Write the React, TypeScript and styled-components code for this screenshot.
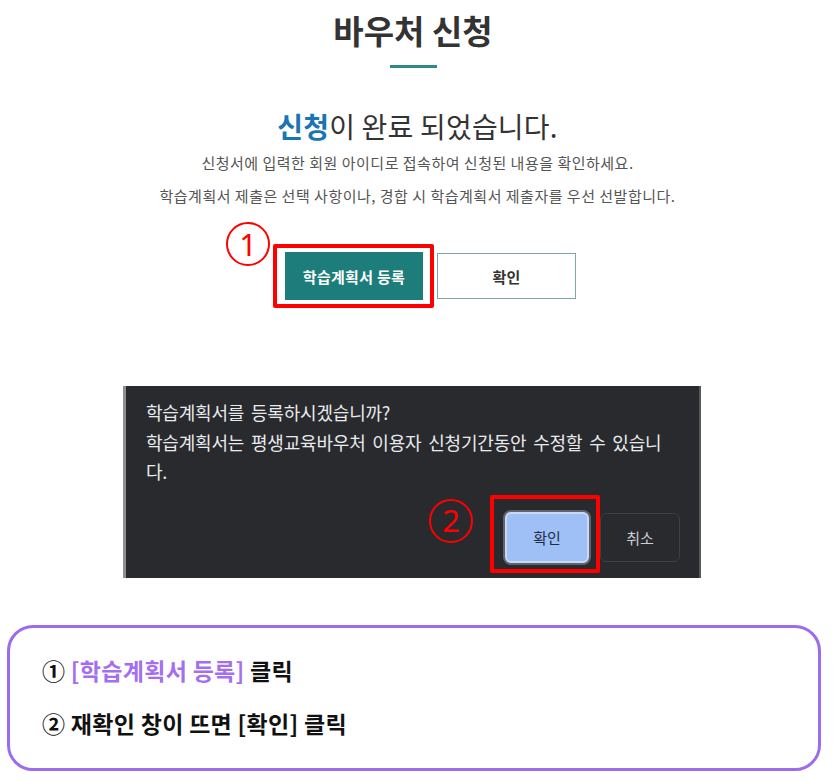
import React from 'react';
import styled, { createGlobalStyle } from 'styled-components';

const GlobalStyle = createGlobalStyle`
  body {
    margin: 0;
    background: #ffffff;
    font-family: "Noto Sans CJK KR", "Noto Sans", sans-serif;
  }
`;

const Page = styled.div`
  width: 835px;
  height: 782px;
  overflow: hidden;
  display: flex;
  flex-direction: column;
`;

const Header = styled.div`
  display: flex;
  flex-direction: column;
  align-items: center;
  padding: 10px 9px 0 0;
`;

const Title = styled.h1`
  margin: 0;
  font-size: 33px;
  line-height: 40px;
  font-weight: 700;
  color: #333;
`;

const TitleBar = styled.div`
  width: 47px;
  height: 3px;
  margin-top: 15px;
  background: #2c8a89;
`;

const Done = styled.p`
  margin: 40px 0 0;
  text-align: center;
  font-size: 28px;
  line-height: 36px;
  color: #333;
  letter-spacing: 0.2px;
`;

const Accent = styled.strong`
  color: #1a75b5;
  font-weight: 700;
`;

const Desc = styled.p`
  margin: 2px 0 0;
  text-align: center;
  font-size: 15px;
  line-height: 33px;
  color: #555;
  letter-spacing: 0.5px;
`;

const ActionRow = styled.div`
  display: flex;
  justify-content: center;
  align-items: center;
  gap: 3px;
  margin-top: 32px;
  padding-left: 14px;
`;

const Highlight = styled.div<{ $pad: string }>`
  position: relative;
  display: flex;
  border: 4px solid #ff0000;
  border-radius: 2px;
  padding: ${(p) => p.$pad};
`;

const Marker = styled.span<{ $left: number; $top: number }>`
  position: absolute;
  left: ${(p) => p.$left}px;
  top: ${(p) => p.$top}px;
  width: 40px;
  height: 40px;
  border: 2px solid #ff0000;
  border-radius: 50%;
  display: flex;
  align-items: center;
  justify-content: center;
  color: #ff0000;
  font-family: "Noto Sans", sans-serif;
  font-size: 31px;
  line-height: 1;
  font-weight: 400;
`;

const PageButton = styled.button<{ $primary?: boolean }>`
  width: ${(p) => (p.$primary ? 138 : 139)}px;
  height: ${(p) => (p.$primary ? 48 : 46)}px;
  border: ${(p) => (p.$primary ? 'none' : '1px solid #7fa6a6')};
  background: ${(p) => (p.$primary ? '#1c7d7a' : '#ffffff')};
  color: ${(p) => (p.$primary ? '#ffffff' : '#333')};
  font-family: inherit;
  font-size: 15px;
  font-weight: 700;
  letter-spacing: 0.3px;
  padding: 0;
`;

const Dialog = styled.div`
  margin: 78px 0 0 123px;
  width: 578px;
  height: 192px;
  box-sizing: border-box;
  background: #292a2d;
  border-left: 3px solid #8e9094;
  border-right: 2px solid #55575b;
  padding: 12px 19px 0 20px;
  display: flex;
  flex-direction: column;
`;

const DialogText = styled.p`
  margin: 0;
  width: 524px;
  font-size: 18px;
  line-height: 29.5px;
  color: #e8eaed;
  letter-spacing: -0.2px;
  word-spacing: 3px;
`;

const DialogActions = styled.div`
  display: flex;
  justify-content: flex-end;
  align-items: flex-start;
  margin-top: 8px;
`;

const DialogButton = styled.button<{ $primary?: boolean }>`
  width: ${(p) => (p.$primary ? 84 : 80)}px;
  height: ${(p) => (p.$primary ? 51 : 49)}px;
  margin-top: ${(p) => (p.$primary ? 0 : 18)}px;
  box-sizing: border-box;
  border-radius: 6px;
  border: ${(p) => (p.$primary ? '2px solid #c9d9f3' : '1px solid #3c3f43')};
  box-shadow: ${(p) => (p.$primary ? '0 0 0 2px #5d6470' : 'none')};
  background: ${(p) => (p.$primary ? '#9ec0f7' : '#292a2d')};
  color: ${(p) => (p.$primary ? '#1f2b44' : '#c9ced6')};
  font-family: inherit;
  font-size: 15px;
  padding: 0;
`;

const Guide = styled.div`
  margin: 47px 0 0 7px;
  width: 814px;
  height: 146px;
  box-sizing: border-box;
  border: 3px solid #9d6cec;
  border-radius: 26px;
  padding: 27px 0 0 32px;
  display: flex;
  flex-direction: column;
  gap: 23px;
`;

const GuideLine = styled.div`
  font-size: 23px;
  line-height: 30px;
  font-weight: 700;
  color: #111;
  letter-spacing: 0.3px;
`;

const GuideAccent = styled.span`
  color: #a36ff0;
`;

export default function App() {
  return (
    <Page>
      <GlobalStyle />
      <Header>
        <Title>바우처 신청</Title>
        <TitleBar />
      </Header>

      <Done>
        <Accent>신청</Accent>이 완료 되었습니다.
      </Done>
      <Desc>
        신청서에 입력한 회원 아이디로 접속하여 신청된 내용을 확인하세요.
        <br />
        학습계획서 제출은 선택 사항이나, 경합 시 학습계획서 제출자를 우선 선발합니다.
      </Desc>

      <ActionRow>
        <Highlight $pad="4px 7px 4px 8px">
          <Marker $left={-51} $top={-26}>1</Marker>
          <PageButton $primary>학습계획서 등록</PageButton>
        </Highlight>
        <PageButton>확인</PageButton>
      </ActionRow>

      {/* 브라우저 확인 창 */}
      <Dialog>
        <DialogText>
          학습계획서를 등록하시겠습니까?
          <br />
          학습계획서는 평생교육바우처 이용자 신청기간동안 수정할 수 있습니다.
        </DialogText>
        <DialogActions>
          <Highlight $pad="13px 7px 6px 11px">
            <Marker $left={-65} $top={0}>2</Marker>
            <DialogButton $primary>확인</DialogButton>
          </Highlight>
          <DialogButton>취소</DialogButton>
        </DialogActions>
      </Dialog>

      <Guide>
        <GuideLine>
          ① <GuideAccent>[학습계획서 등록]</GuideAccent> 클릭
        </GuideLine>
        <GuideLine>② 재확인 창이 뜨면 [확인] 클릭</GuideLine>
      </Guide>
    </Page>
  );
}
